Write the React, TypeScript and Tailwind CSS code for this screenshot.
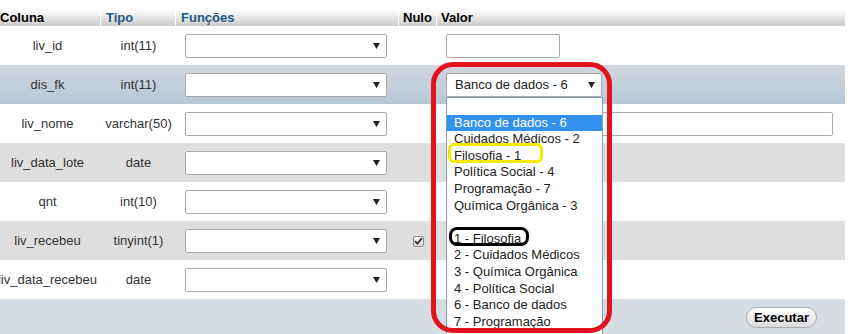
import React from "react";

const Arrow = () => (
  <svg width="7" height="6" viewBox="0 0 7 6" className="absolute right-[6px] top-1/2 -translate-y-1/2">
    <polygon points="0,0 7,0 3.5,6" fill="#222" />
  </svg>
);

const FuncSelect = () => (
  <div className="relative w-[202px] h-[24px] bg-white border border-[#a9a9a9] rounded-[2px]">
    <Arrow />
  </div>
);

type Row = { name: string; type: string; bg: string; check?: boolean; value: "input" | "select" | "wide" | "none" };

const rows: Row[] = [
  { name: "liv_id", type: "int(11)", bg: "bg-white", value: "input" },
  { name: "dis_fk", type: "int(11)", bg: "bg-linear-to-b from-[#d1d7de] to-[#b7c7d7]", value: "select" },
  { name: "liv_nome", type: "varchar(50)", bg: "bg-white", value: "wide" },
  { name: "liv_data_lote", type: "date", bg: "bg-[#dfdfdf]", value: "none" },
  { name: "qnt", type: "int(10)", bg: "bg-white", value: "none" },
  { name: "liv_recebeu", type: "tinyint(1)", bg: "bg-[#dfdfdf]", check: true, value: "none" },
  { name: "liv_data_recebeu", type: "date", bg: "bg-white", value: "none" },
];

const options1 = [
  "",
  "Banco de dados - 6",
  "Cuidados Médicos - 2",
  "Filosofia - 1",
  "Política Social - 4",
  "Programação - 7",
  "Química Orgânica - 3",
  "",
  "1 - Filosofia",
  "2 - Cuidados Médicos",
  "3 - Química Orgânica",
  "4 - Política Social",
  "6 - Banco de dados",
  "7 - Programação",
];

export default function App() {
  return (
    <div
      className="relative w-[855px] h-[334px] overflow-hidden bg-white text-[13px] text-[#333]"
      style={{ fontFamily: '"Liberation Sans", Arial, sans-serif' }}
    >
      <div className="ml-[-6px] w-[851px] pt-[10px]">
        {/* header */}
        <div className="grid grid-cols-[107px_75px_223px_38px_408px] h-[16px] bg-linear-to-b from-white to-[#cbcbcb] font-bold leading-[15px]">
          <div className="pl-[6px] border-r border-white text-black">Coluna</div>
          <div className="pl-[5px] border-r border-white text-[#235a81]">Tipo</div>
          <div className="pl-[5px] border-r border-white text-[#235a81]">Funções</div>
          <div className="pl-[4px] border-r border-white text-black">Nulo</div>
          <div className="pl-[4px] text-black">Valor</div>
        </div>
        {rows.map((r) => (
          <div key={r.name} className={`grid grid-cols-[107px_75px_223px_38px_408px] h-[39px] ${r.bg}`}>
            <div className="flex items-center justify-center whitespace-nowrap">{r.name}</div>
            <div className="flex items-center justify-center whitespace-nowrap">{r.type}</div>
            <div className="flex items-center pl-[9px]">
              <FuncSelect />
            </div>
            <div className="flex items-center justify-center">
              {r.check && (
                <div className="w-[11px] h-[11px] mt-[1px] ml-[1px] border border-[#8a8a8a] rounded-[2px] bg-linear-to-b from-[#f4f4f4] to-[#dcdcdc] flex items-center justify-center">
                  <svg width="9" height="8" viewBox="0 0 9 8">
                    <path d="M1 4.2 L3.4 6.6 L8 1.2" stroke="#333" strokeWidth="1.8" fill="none" />
                  </svg>
                </div>
              )}
            </div>
            <div className="flex items-center pl-[9px]">
              {r.value === "input" && <div className="w-[114px] h-[24px] bg-white border border-[#a9a9a9] rounded-[2px]" />}
              {r.value === "wide" && <div className="w-[387px] h-[24px] bg-white border border-[#a9a9a9] rounded-[2px]" />}
              {r.value === "select" && (
                <div className="relative w-[156px] h-[24px] bg-white border border-[#a9a9a9] rounded-[2px] flex items-center pl-[8px] text-[#222]">
                  Banco de dados - 6
                  <Arrow />
                </div>
              )}
            </div>
          </div>
        ))}
        {/* footer */}
        <div className="h-[35px] bg-[#d5dde3] flex items-start justify-end pr-[28px] pt-[8px]">
          <button className="w-[71px] h-[21px] rounded-full border border-[#aaa] bg-linear-to-b from-white to-[#dcdcdc] font-bold text-[13px] text-black leading-[19px]">
            Executar
          </button>
        </div>
      </div>

      {/* open dropdown list */}
      <div className="absolute left-[446px] top-[97px] w-[157px] h-[240px] bg-white border border-[#7f9dc0] text-[#222]">
        {options1.map((o, i) => (
          <div
            key={i}
            className={`h-[16.6px] leading-[16.6px] pl-[7px] whitespace-nowrap ${i === 1 ? "bg-[#3391f0] text-white" : ""}`}
          >
            {o}
          </div>
        ))}
      </div>

      {/* annotations */}
      <div className="absolute left-[431px] top-[62px] w-[181px] h-[271px] border-[5px] border-[#e3131e] rounded-[22px]" />
      <div className="absolute left-[448px] top-[143px] w-[95px] h-[20px] border-[3px] border-[#f6ea00] rounded-[6px]" />
      <div className="absolute left-[449px] top-[227px] w-[80px] h-[19px] border-[3px] border-black rounded-[8px]" />
    </div>
  );
}
